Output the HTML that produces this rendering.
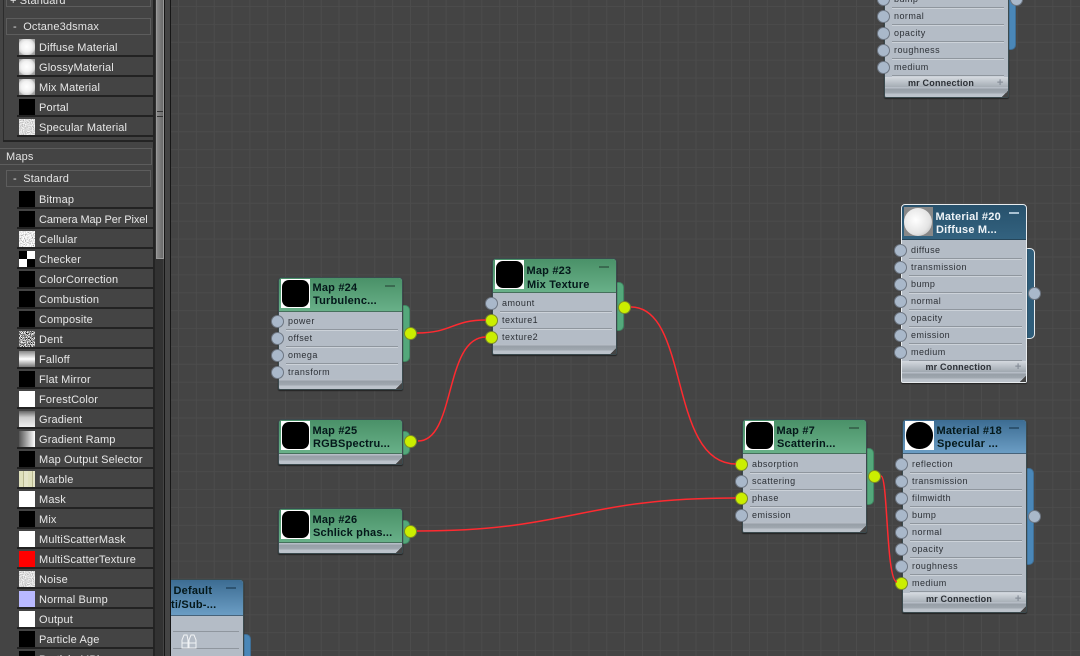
<!DOCTYPE html>
<html><head><meta charset="utf-8">
<style>
html,body{margin:0;padding:0;width:1080px;height:656px;overflow:hidden;background:#444}
*{box-sizing:border-box}
body{position:relative;font-family:"Liberation Sans",sans-serif}
#cv{position:absolute;left:171px;top:0;width:909px;height:656px;overflow:hidden;background-color:#444;
background-image:linear-gradient(90deg,#4c4c4c 1px,transparent 1px),linear-gradient(0deg,#4b4b4b 1px,transparent 1px);
background-size:17.85px 17.9px;background-position:7px 7px}
#sb{position:absolute;left:0;top:0;width:171px;height:656px;background:#444;overflow:hidden}
.ln{position:absolute;top:0;height:656px}
.box{position:absolute;height:17px;border:1px solid #5d5d5d;color:#e4e4e4;font-size:11px;line-height:17px;letter-spacing:.15px;white-space:pre}
.row{position:absolute;left:17px;width:137px;height:20px;border-bottom:2px solid #222;color:#e8e8e8;font-size:11px;line-height:23px;letter-spacing:.15px;padding-left:22px;white-space:nowrap;overflow:hidden}
.i{position:absolute;left:2px;top:2px;width:16px;height:16px;background:#000}
.w{background:#fff}
.sp{background:radial-gradient(circle at 48% 48%,#fff 0,#f2f2f2 45%,#d8d8d8 68%,#aaa 76%,#909090 100%)}
.gv{background:linear-gradient(#666,#ccc 40%,#eee)}
.gh{background:linear-gradient(90deg,#555,#fff)}
.fa{background:linear-gradient(#888,#fff 50%,#777)}
.nz{filter:url(#cell)}
.nd{filter:url(#dent)}
.ns{filter:url(#soft)}
.ck{background:conic-gradient(#fff 0 25%,#000 25% 50%,#fff 50% 75%,#000 75%)}
.mb{background:repeating-linear-gradient(90deg,#dfe0bc 0 4px,#b9b88f 4px 5px,#e4e4c8 5px 9px)}
.n{position:absolute;width:125px;margin-left:-.5px;background:#b4bcc6;border:1px solid #3b4a4e;border-radius:4px 4px 2px 2px;box-shadow:0 1px 1px #222}
.h{position:absolute;left:0;top:0;width:100%;height:34px;border-bottom:1px solid #46705c;border-radius:3px 3px 0 0;background:linear-gradient(#4a9168,#68b088);color:#04181a;font-size:11px;font-weight:bold;line-height:13px;letter-spacing:.2px}
.b .h{background:linear-gradient(#3c6c92,#6b9dc4);border-bottom-color:#47637a}
.d .h{background:linear-gradient(#27516c,#33627f);color:#eef3f7;border-bottom-color:#26465a}
.t1,.t2{position:absolute;left:34px;white-space:nowrap}
.t1{top:4px}.t2{top:17px;left:34.5px}
.th{position:absolute;left:2px;top:1px;width:29px;height:29px;background:#fff;overflow:hidden}
.th:after{content:"";position:absolute;left:1px;top:.5px;width:27px;height:27px;background:#000;border-radius:7px}
.tm:after{border-radius:13px}
.ts{background:#888}.ts:after{display:none}
.ts i{position:absolute;left:0;top:1px;width:28px;height:28px;border-radius:50%;background:radial-gradient(circle at 42% 42%,#fff,#e4e4e4 60%,#aaa)}
.m{position:absolute;right:7px;top:7px;width:10px;height:2px;background:#3a6a50}
.b .m{background:#2d5370}.d .m{background:#a9c1d2}
.r{position:absolute;left:0;width:100%;height:17px;color:#2c3036;font-size:9px;line-height:16px;letter-spacing:.45px;padding-left:9.5px}
.r:after{content:"";position:absolute;left:7px;right:4px;bottom:0;height:1px;background:#8f969e;box-shadow:0 1px 0 #ccd2d9}
.s{position:absolute;left:-8px;top:2px;width:13px;height:13px;border-radius:50%;background:#a9b8ca;border:1px solid #6d7682}
.y{background:#cbee00;border-color:#7b8a2a}
.o{position:absolute;width:13px;height:13px;border-radius:50%;background:#a9b8ca;border:1px solid #6d7682;z-index:3}
.o.y{background:#cbee00;border-color:#7b8a2a}
.f{position:absolute;left:0;right:0;bottom:0;height:10px;background:linear-gradient(#b6bdc6 0,#b6bdc6 1px,#979fa7 2px,#a0a8b0 6px,#bcc3cb 7px);border-radius:0 0 2px 2px}
.f:before{content:"";position:absolute;right:0;bottom:0;width:6px;height:6px;background:linear-gradient(135deg,transparent 50%,#444 50%)}
.mr{position:absolute;left:0;right:0;height:11px;background:linear-gradient(#d4d9df,#a0a8b0);color:#2c3036;font-size:9px;font-weight:bold;line-height:12px;letter-spacing:.2px;text-align:center;padding-right:10px}
.mr b{position:absolute;right:4px;top:0;color:#88909a;font-size:11px}
.tab{position:absolute;width:8px;border-radius:0 5px 5px 0;background:#54a87b;border:1px solid #3f8a63;border-left:0}
.tb{background:#4a87b8;border-color:#3f6f96}
.td{background:#2f5d7a;border:1px solid #e8ecef;border-left:0}
svg.w1{position:absolute;left:0;top:0;z-index:5}
#dn{position:absolute;left:0;top:0;width:1080px;height:656px;filter:blur(.3px)}
</style></head><body>
<svg width="0" height="0" style="position:absolute">
<filter id="cell" x="0" y="0" width="100%" height="100%"><feTurbulence type="fractalNoise" baseFrequency="1.1" numOctaves="1" seed="3"/><feColorMatrix values="3 0 0 0 -.6  3 0 0 0 -.6  3 0 0 0 -.6  0 0 0 0 1"/></filter>
<filter id="dent" x="0" y="0" width="100%" height="100%"><feTurbulence type="fractalNoise" baseFrequency="1.2" numOctaves="1" seed="7"/><feColorMatrix values="7 0 0 0 -3  7 0 0 0 -3  7 0 0 0 -3  0 0 0 0 1"/></filter>
<filter id="soft" x="0" y="0" width="100%" height="100%"><feTurbulence type="fractalNoise" baseFrequency=".9" numOctaves="2" seed="5"/><feColorMatrix values="1.3 0 0 0 .08  1.3 0 0 0 .08  1.3 0 0 0 .08  0 0 0 0 1"/></filter>
</svg>

<div id="cv"></div>

<div id="dn">
<!-- Default node -->
<div class="tab tb" style="left:243px;top:634px;height:40px"></div>
<div class="n b" style="left:120px;top:579px;height:100px;width:124px">
<div class="h" style="height:36px"><span class="t1" style="left:53px;top:5px">Default</span><span class="t2" style="left:31px;top:19px">Multi/Sub-...</span><div class="m"></div></div>
<div style="position:absolute;left:52px;right:4px;top:51px;height:1px;background:#8f969e"></div>
<div style="position:absolute;left:52px;right:4px;top:68px;height:1px;background:#8f969e"></div>
<svg style="position:absolute;left:60px;top:53px" width="16" height="17" fill="none" stroke="#f1f3f5" stroke-width="1"><path d="M1 15V7L3 2H6L7 7V15ZM8 15V7L10 2H13L15 7V15ZM1 10H7M8 10H15"/></svg>
</div>

<!-- Top node -->
<div class="tab tb" style="left:1008px;top:-50px;height:100px"></div>
<div class="o" style="left:1010px;top:-7px"></div>
<div class="n b" style="left:884px;top:-60px;height:158px">
<div class="r" style="top:50px"><div class="s"></div>bump</div>
<div class="r" style="top:67px"><div class="s"></div>normal</div>
<div class="r" style="top:84px"><div class="s"></div>opacity</div>
<div class="r" style="top:101px"><div class="s"></div>roughness</div>
<div class="r" style="top:118px"><div class="s"></div>medium</div>
<div class="mr" style="top:136px">mr Connection<b>+</b></div>
<div class="f"></div>
</div>

<!-- Material 20 -->
<div class="tab td" style="left:1027px;top:248px;height:91px"></div>
<div class="o" style="left:1028px;top:287px"></div>
<div class="n d" style="left:901px;top:204px;width:126px;height:179px;border:1.5px solid #e8ecef">
<div class="h" style="height:35px"><div class="th ts" style="left:2px;top:2px"><i></i></div><span class="t1" style="left:34px;top:6px">Material #20</span><span class="t2" style="top:19px">Diffuse M...</span><div class="m"></div></div>
<div class="r" style="top:37px"><div class="s"></div>diffuse</div>
<div class="r" style="top:54px"><div class="s"></div>transmission</div>
<div class="r" style="top:71px"><div class="s"></div>bump</div>
<div class="r" style="top:88px"><div class="s"></div>normal</div>
<div class="r" style="top:105px"><div class="s"></div>opacity</div>
<div class="r" style="top:122px"><div class="s"></div>emission</div>
<div class="r" style="top:139px"><div class="s"></div>medium</div>
<div class="mr" style="top:156px">mr Connection<b>+</b></div>
<div class="f"></div>
</div>

<!-- Material 18 -->
<div class="tab tb" style="left:1026px;top:468px;height:97px"></div>
<div class="o" style="left:1028px;top:510px"></div>
<div class="n b" style="left:902px;top:419px;height:194px">
<div class="h"><div class="th tm"></div><span class="t1" style="top:5px">Material #18</span><span class="t2" style="top:18px">Specular ...</span><div class="m"></div></div>
<div class="r" style="top:36px"><div class="s"></div>reflection</div>
<div class="r" style="top:53px"><div class="s"></div>transmission</div>
<div class="r" style="top:70px"><div class="s"></div>filmwidth</div>
<div class="r" style="top:87px"><div class="s"></div>bump</div>
<div class="r" style="top:104px"><div class="s"></div>normal</div>
<div class="r" style="top:121px"><div class="s"></div>opacity</div>
<div class="r" style="top:138px"><div class="s"></div>roughness</div>
<div class="r" style="top:155px"><div class="s y"></div>medium</div>
<div class="mr" style="top:173px">mr Connection<b>+</b></div>
<div class="f"></div>
</div>

<!-- Map 24 -->
<div class="tab" style="left:402px;top:305px;height:57px"></div>
<div class="o y" style="left:404px;top:327px"></div>
<div class="n" style="left:278px;top:277px;height:113px">
<div class="h"><div class="th"></div><span class="t1">Map #24</span><span class="t2">Turbulenc...</span><div class="m"></div></div>
<div class="r" style="top:35px"><div class="s"></div>power</div>
<div class="r" style="top:52px"><div class="s"></div>offset</div>
<div class="r" style="top:69px"><div class="s"></div>omega</div>
<div class="r" style="top:86px"><div class="s"></div>transform</div>
<div class="f"></div>
</div>

<!-- Map 23 -->
<div class="tab" style="left:616px;top:282px;height:49px"></div>
<div class="o y" style="left:618px;top:301px"></div>
<div class="n" style="left:492px;top:258px;height:97px">
<div class="h"><div class="th"></div><span class="t1" style="top:6px">Map #23</span><span class="t2" style="top:20px">Mix Texture</span><div class="m"></div></div>
<div class="r" style="top:36px"><div class="s"></div>amount</div>
<div class="r" style="top:53px"><div class="s y"></div>texture1</div>
<div class="r" style="top:70px"><div class="s y"></div>texture2</div>
<div class="f"></div>
</div>

<!-- Map 25 -->
<div class="tab" style="left:402px;top:431px;height:24px"></div>
<div class="o y" style="left:404px;top:435px"></div>
<div class="n" style="left:278px;top:419px;height:46px">
<div class="h"><div class="th"></div><span class="t1" style="top:5px">Map #25</span><span class="t2" style="top:18px">RGBSpectru...</span></div>
<div class="f"></div>
</div>

<!-- Map 26 -->
<div class="tab" style="left:402px;top:520px;height:24px"></div>
<div class="o y" style="left:404px;top:525px"></div>
<div class="n" style="left:278px;top:508px;height:46px">
<div class="h"><div class="th"></div><span class="t1" style="top:5px">Map #26</span><span class="t2" style="top:18px">Schlick phas...</span></div>
<div class="f"></div>
</div>

<!-- Map 7 -->
<div class="tab" style="left:866px;top:448px;height:57px"></div>
<div class="o y" style="left:868px;top:470px"></div>
<div class="n" style="left:742px;top:419px;height:114px">
<div class="h"><div class="th"></div><span class="t1" style="top:5px">Map #7</span><span class="t2" style="top:18px">Scatterin...</span><div class="m"></div></div>
<div class="r" style="top:36px"><div class="s y"></div>absorption</div>
<div class="r" style="top:53px"><div class="s"></div>scattering</div>
<div class="r" style="top:70px"><div class="s y"></div>phase</div>
<div class="r" style="top:87px"><div class="s"></div>emission</div>
<div class="f"></div>
</div>
</div>

<svg class="w1" width="1080" height="656" fill="none" stroke="#ff2a30" stroke-width="1.5">
<path d="M417 333C452 333 452 320 486 320"/>
<path d="M418 441C456 441 444 337 486 337"/>
<path d="M631 307C690 307 668 464 736 464"/>
<path d="M417 531C570 531 580 498 736 498"/>
<path d="M881 476C888 476 886 582 897 582"/>
</svg>

<div id="sb" style="z-index:6">
<div style="position:absolute;left:3px;top:0;width:1px;height:140px;background:#2c2c2c"></div>
<div class="ln" style="left:153px;width:2px;background:#242424"></div>
<div class="ln" style="left:155px;width:8px;background:#323232"></div>
<div style="position:absolute;left:156px;top:-2px;width:8px;height:261px;background:linear-gradient(90deg,#8a8a8a,#6a6a6a);border:1px solid #999"></div>
<div style="position:absolute;left:157px;top:111px;width:6px;height:6px;border-top:1px solid #333;border-bottom:1px solid #333"></div>
<div class="ln" style="left:164px;width:1px;background:#161616"></div>
<div class="ln" style="left:170px;width:1px;background:#161616"></div>

<div class="box" style="left:6px;top:-8px;width:145px;height:15px;line-height:16px;padding-left:3px">+ Standard</div>
<div class="box" style="left:6px;top:18px;width:145px;padding-left:6px">-  Octane3dsmax</div>
<div class="row" style="top:37px"><span class="i sp"></span>Diffuse Material</div>
<div class="row" style="top:57px"><span class="i sp"></span>GlossyMaterial</div>
<div class="row" style="top:77px"><span class="i sp"></span>Mix Material</div>
<div class="row" style="top:97px"><span class="i"></span>Portal</div>
<div class="row" style="top:117px"><span class="i ns"></span>Specular Material</div>
<div style="position:absolute;left:3px;top:140px;width:151px;height:2px;background:#242424"></div>
<div class="box" style="left:-1px;top:148px;width:153px;padding-left:6px">Maps</div>
<div class="box" style="left:6px;top:170px;width:145px;padding-left:6px">-  Standard</div>
<div class="row" style="top:189px"><span class="i"></span>Bitmap</div>
<div class="row" style="top:209px;letter-spacing:-.1px"><span class="i"></span>Camera Map Per Pixel</div>
<div class="row" style="top:229px"><span class="i nz"></span>Cellular</div>
<div class="row" style="top:249px"><span class="i ck"></span>Checker</div>
<div class="row" style="top:269px"><span class="i"></span>ColorCorrection</div>
<div class="row" style="top:289px"><span class="i"></span>Combustion</div>
<div class="row" style="top:309px"><span class="i"></span>Composite</div>
<div class="row" style="top:329px"><span class="i nd"></span>Dent</div>
<div class="row" style="top:349px"><span class="i fa"></span>Falloff</div>
<div class="row" style="top:369px"><span class="i"></span>Flat Mirror</div>
<div class="row" style="top:389px"><span class="i w"></span>ForestColor</div>
<div class="row" style="top:409px"><span class="i gv"></span>Gradient</div>
<div class="row" style="top:429px"><span class="i gh"></span>Gradient Ramp</div>
<div class="row" style="top:449px"><span class="i"></span>Map Output Selector</div>
<div class="row" style="top:469px"><span class="i mb"></span>Marble</div>
<div class="row" style="top:489px"><span class="i w"></span>Mask</div>
<div class="row" style="top:509px"><span class="i"></span>Mix</div>
<div class="row" style="top:529px"><span class="i w"></span>MultiScatterMask</div>
<div class="row" style="top:549px"><span class="i" style="background:#f00"></span>MultiScatterTexture</div>
<div class="row" style="top:569px"><span class="i ns"></span>Noise</div>
<div class="row" style="top:589px"><span class="i" style="background:#b9b9ff"></span>Normal Bump</div>
<div class="row" style="top:609px"><span class="i w"></span>Output</div>
<div class="row" style="top:629px"><span class="i"></span>Particle Age</div>
<div class="row" style="top:649px"><span class="i"></span>Particle MBlur</div>
</div>
</body></html>
